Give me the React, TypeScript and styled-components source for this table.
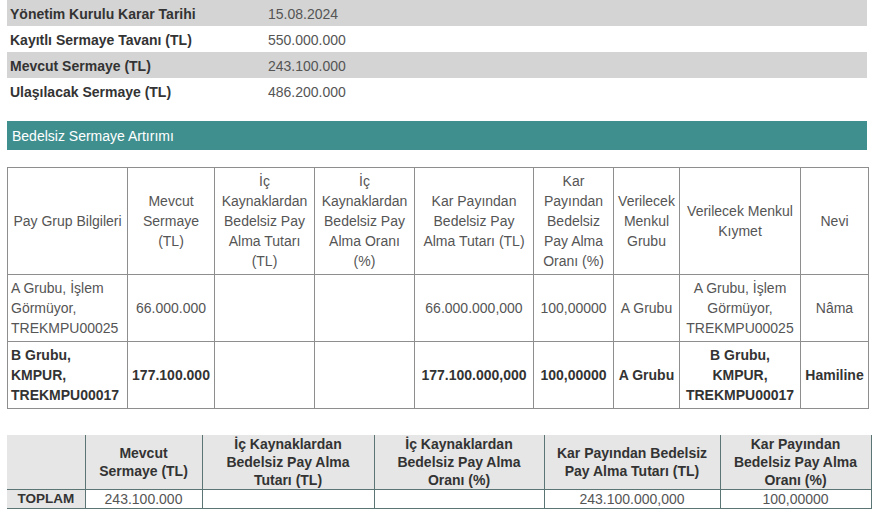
import React from "react";
import styled, { createGlobalStyle } from "styled-components";

const Global = createGlobalStyle`
  html, body { margin: 0; padding: 0; background: #fff; }
  body { font-family: "Liberation Sans", Arial, sans-serif; font-size: 14px; color: #444; }
`;

const Page = styled.div`
  width: 874px;
  padding: 0 0 0 7px;
  box-sizing: border-box;
  display: flex;
  flex-direction: column;
`;

const InfoTable = styled.table`
  width: 860px;
  border-collapse: collapse;
  table-layout: fixed;
`;

const InfoRow = styled.tr<{ $shaded?: boolean }>`
  height: 26px;
  background: ${(p) => (p.$shaded ? "#d4d4d4" : "#fff")};
`;

const InfoLabel = styled.td`
  width: 252px;
  padding: 1px 3px 0;
  font-weight: bold;
  color: #333;
  font-size: 14px;
  vertical-align: middle;
`;

const InfoValue = styled.td`
  padding: 1px 3px 0;
  color: #555;
  font-size: 14px;
  vertical-align: middle;
`;

const SectionBar = styled.div`
  margin-top: 17px;
  width: 860px;
  height: 29px;
  background: #3f8f8f;
  color: #fff;
  font-size: 14px;
  display: flex;
  align-items: center;
  padding-left: 5px;
  box-sizing: border-box;
`;

const GroupTable = styled.table`
  margin-top: 17px;
  width: 861px;
  border-collapse: collapse;
  table-layout: fixed;
  font-size: 14px;
  line-height: 20px;
  color: #555;
`;

const GroupHead = styled.th`
  border: 1px solid #8e8e8e;
  padding: 3px 2px;
  font-weight: normal;
  text-align: center;
  vertical-align: middle;
  color: #555;
`;

const GroupCell = styled.td<{ $bold?: boolean; $left?: boolean }>`
  border: 1px solid #8e8e8e;
  padding: 3px 3px;
  text-align: ${(p) => (p.$left ? "left" : "center")};
  vertical-align: middle;
  font-weight: ${(p) => (p.$bold ? "bold" : "normal")};
  color: ${(p) => (p.$bold ? "#333" : "#555")};
`;

const TotalTable = styled.table`
  margin-top: 26px;
  width: 864px;
  border-collapse: collapse;
  table-layout: fixed;
  font-size: 14px;
  line-height: 18px;
`;

const TotalHead = styled.th`
  background: #e6e6e6;
  border-left: 1px solid #5b7474;
  border-right: 1px solid #5b7474;
  border-bottom: 1px solid #5b7474;
  padding: 0 2px;
  font-weight: bold;
  color: #333;
  text-align: center;
  vertical-align: middle;
  height: 53px;
  &:first-child { border-left: none; }
`;

const TotalLabel = styled.th`
  background: #e6e6e6;
  border-right: 1px solid #5b7474;
  border-bottom: 1px solid #5b7474;
  padding: 0;
  font-weight: bold;
  font-size: 13.5px;
  color: #333;
  text-align: center;
  height: 17px;
`;

const TotalCell = styled.td`
  border: 1px solid #5b7474;
  border-top: none;
  padding: 0 2px;
  text-align: center;
  color: #555;
  height: 17px;
`;

const info = [
  ["Yönetim Kurulu Karar Tarihi", "15.08.2024"],
  ["Kayıtlı Sermaye Tavanı (TL)", "550.000.000"],
  ["Mevcut Sermaye (TL)", "243.100.000"],
  ["Ulaşılacak Sermaye (TL)", "486.200.000"],
];

const groupCols = [120, 87, 100, 100, 119, 80, 66, 121, 68];

const groupHeads: string[][] = [
  ["Pay Grup Bilgileri"],
  ["Mevcut", "Sermaye", "(TL)"],
  ["İç", "Kaynaklardan", "Bedelsiz Pay", "Alma Tutarı", "(TL)"],
  ["İç", "Kaynaklardan", "Bedelsiz Pay", "Alma Oranı", "(%)"],
  ["Kar Payından", "Bedelsiz Pay", "Alma Tutarı (TL)"],
  ["Kar", "Payından", "Bedelsiz", "Pay Alma", "Oranı (%)"],
  ["Verilecek", "Menkul", "Grubu"],
  ["Verilecek Menkul", "Kıymet"],
  ["Nevi"],
];

type GroupRow = { bold: boolean; cells: string[][] };

const groupRows: GroupRow[] = [
  {
    bold: false,
    cells: [
      ["A Grubu, İşlem", "Görmüyor,", "TREKMPU00025"],
      ["66.000.000"],
      [""],
      [""],
      ["66.000.000,000"],
      ["100,00000"],
      ["A Grubu"],
      ["A Grubu, İşlem", "Görmüyor,", "TREKMPU00025"],
      ["Nâma"],
    ],
  },
  {
    bold: true,
    cells: [
      ["B Grubu,", "KMPUR,", "TREKMPU00017"],
      ["177.100.000"],
      [""],
      [""],
      ["177.100.000,000"],
      ["100,00000"],
      ["A Grubu"],
      ["B Grubu,", "KMPUR,", "TREKMPU00017"],
      ["Hamiline"],
    ],
  },
];

const totalCols = [78, 117, 172, 170, 176, 151];

const totalHeads: string[][] = [
  [],
  ["Mevcut", "Sermaye (TL)"],
  ["İç Kaynaklardan", "Bedelsiz Pay Alma", "Tutarı (TL)"],
  ["İç Kaynaklardan", "Bedelsiz Pay Alma", "Oranı (%)"],
  ["Kar Payından Bedelsiz", "Pay Alma Tutarı (TL)"],
  ["Kar Payından", "Bedelsiz Pay Alma", "Oranı (%)"],
];

const totals = ["243.100.000", "", "", "243.100.000,000", "100,00000"];

const Lines = ({ lines }: { lines: string[] }) => (
  <>
    {lines.map((l, i) => (
      <React.Fragment key={i}>
        {i > 0 && <br />}
        {l}
      </React.Fragment>
    ))}
  </>
);

export default function App() {
  return (
    <>
      <Global />
      <Page>
        <InfoTable>
          <tbody>
            {info.map(([k, v], i) => (
              <InfoRow key={k} $shaded={i % 2 === 0}>
                <InfoLabel>{k}</InfoLabel>
                <InfoValue>{v}</InfoValue>
              </InfoRow>
            ))}
          </tbody>
        </InfoTable>

        <SectionBar>Bedelsiz Sermaye Artırımı</SectionBar>

        <GroupTable>
          <colgroup>
            {groupCols.map((w, i) => (
              <col key={i} style={{ width: w }} />
            ))}
          </colgroup>
          <thead>
            <tr>
              {groupHeads.map((h, i) => (
                <GroupHead key={i}>
                  <Lines lines={h} />
                </GroupHead>
              ))}
            </tr>
          </thead>
          <tbody>
            {groupRows.map((r, ri) => (
              <tr key={ri}>
                {r.cells.map((c, ci) => (
                  <GroupCell key={ci} $bold={r.bold} $left={ci === 0}>
                    <Lines lines={c} />
                  </GroupCell>
                ))}
              </tr>
            ))}
          </tbody>
        </GroupTable>

        <TotalTable>
          <colgroup>
            {totalCols.map((w, i) => (
              <col key={i} style={{ width: w }} />
            ))}
          </colgroup>
          <thead>
            <tr>
              {totalHeads.map((h, i) => (
                <TotalHead key={i}>
                  <Lines lines={h} />
                </TotalHead>
              ))}
            </tr>
          </thead>
          <tbody>
            <tr>
              <TotalLabel>TOPLAM</TotalLabel>
              {totals.map((t, i) => (
                <TotalCell key={i}>{t}</TotalCell>
              ))}
            </tr>
          </tbody>
        </TotalTable>
      </Page>
    </>
  );
}
